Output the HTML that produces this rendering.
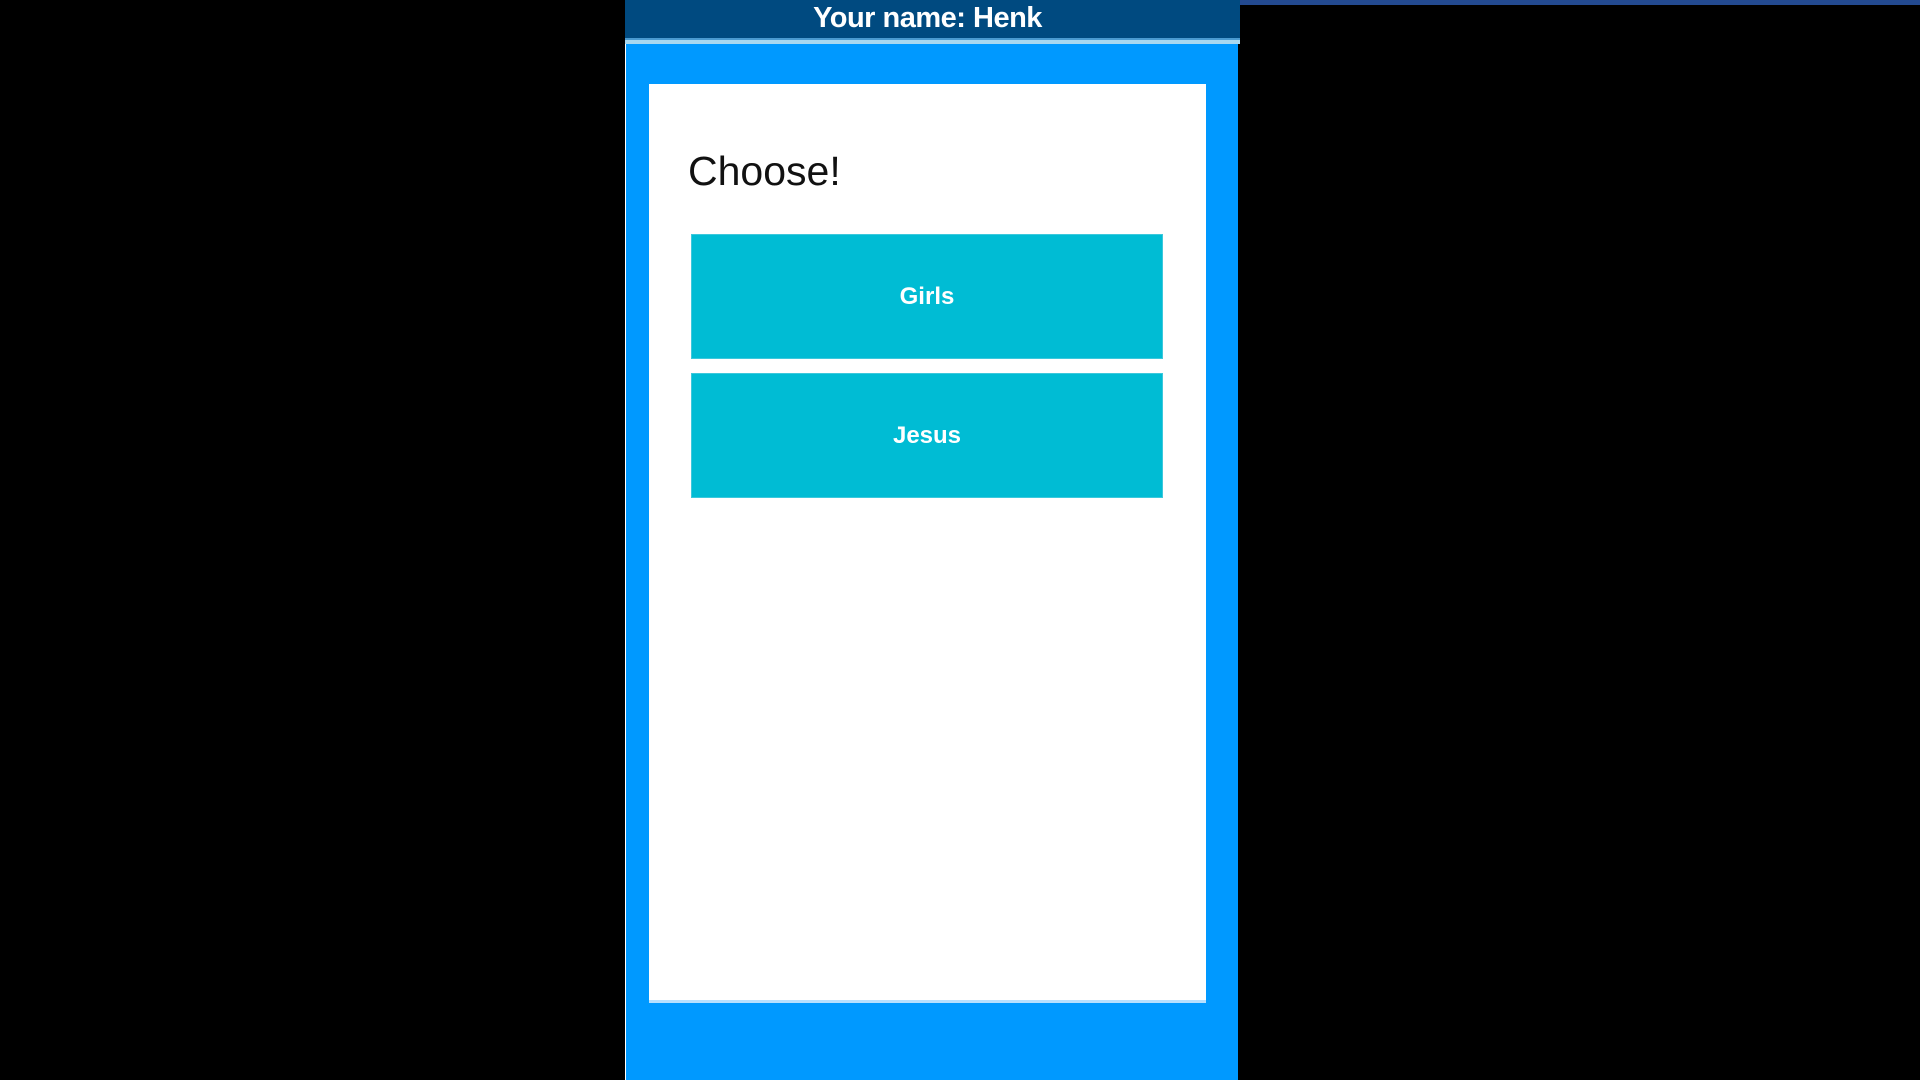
<!DOCTYPE html>
<html><head><style>
*{margin:0;padding:0;box-sizing:border-box}
body{width:1920px;height:1080px;background:#000;position:relative;overflow:hidden;font-family:"Liberation Sans",Arial,sans-serif}
.topbar{position:absolute;left:1240px;top:0;width:680px;height:5px;background:#234a90}
.panel{position:absolute;left:625px;top:0;width:613px;height:1080px;background:#0099ff;border-left:1px solid #fff}
.header{position:absolute;left:625px;top:0;width:605px;height:38px;background:#004a80;color:#fff;font-weight:bold;font-size:29px;text-align:center;line-height:36px;letter-spacing:-0.5px}
.hbg{position:absolute;left:1230px;top:0;width:10px;height:38px;background:#004a80}
.strip{position:absolute;left:625px;top:38px;width:615px;height:6px;background:#a8d8f0;border-top:2px solid #4a9ad0}
.card{position:absolute;left:649px;top:84px;width:557px;height:919px;background:#fff;border-bottom:3px solid #b8e0ff}
.h{position:absolute;left:688px;top:148px;font-size:41px;color:#111}
.btn{position:absolute;left:691px;width:472px;background:#00bcd4;color:#fff;font-size:24px;font-weight:bold;text-align:center;border:1px solid #3cc8dc}
</style></head><body>
<div class="topbar"></div>
<div class="panel"></div>
<div class="header">Your name: Henk</div>
<div class="hbg"></div>
<div class="strip"></div>
<div class="card"></div>
<div class="h">Choose!</div>
<div class="btn" style="top:234px;height:125px;line-height:123px">Girls</div>
<div class="btn" style="top:373px;height:125px;line-height:123px">Jesus</div>
</body></html>
